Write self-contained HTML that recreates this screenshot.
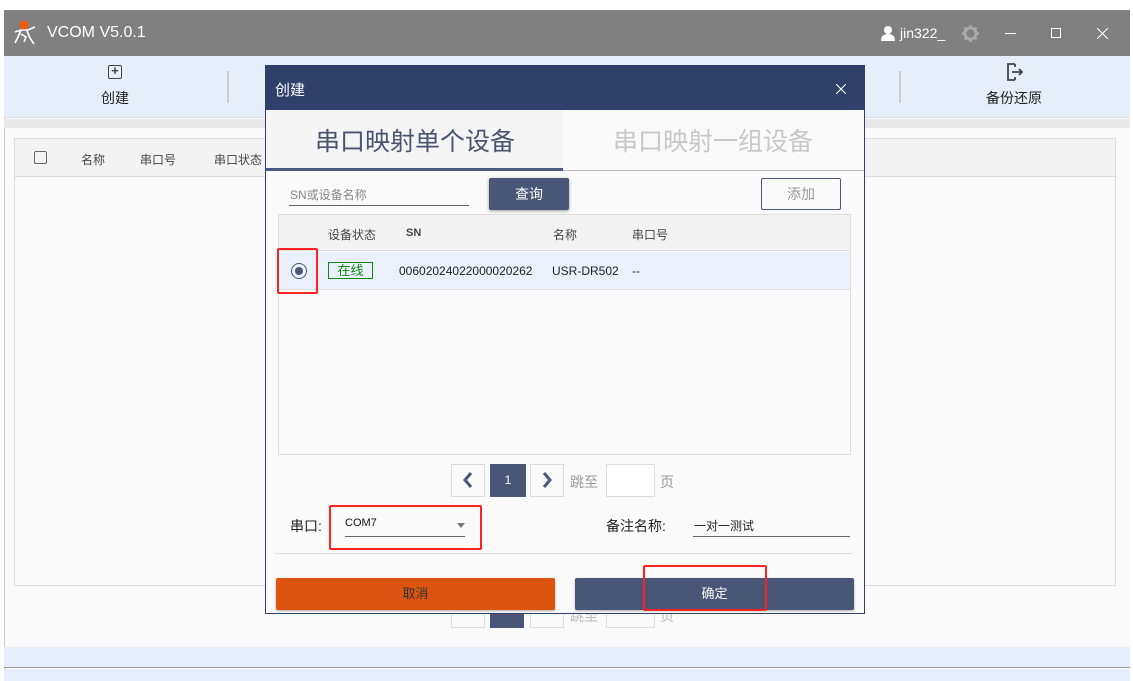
<!DOCTYPE html><html><head><meta charset="utf-8"><style>
*{margin:0;padding:0;box-sizing:border-box}
body{width:1133px;height:681px;position:relative;background:#fff;font-family:"Liberation Sans","Noto Sans CJK SC",sans-serif;overflow:hidden;font-size:12px;color:#333}
.a{position:absolute}
</style></head><body>
<div class="a" style="left:4px;top:10px;width:1126px;height:671px;background:#fafafa;border-left:1px solid #ccc"></div>
<div class="a" style="left:4px;top:10px;width:1126px;height:46px;background:#808080"></div>
<svg class="a" style="left:13px;top:19px" width="26" height="28" viewBox="0 0 26 28"><path d="M2 13 L8 11 L15 11 L22 8 M8 11 L5 18 L2 24 M14 12 L17 19 L21 25 M8 15 L13 18 L11 23" stroke="#fff" stroke-width="1.6" fill="none"/><circle cx="11" cy="6" r="4.5" fill="#f25a0c"/></svg>
<div class="a" style="left:47px;top:24px;color:#fff;font-size:16px">VCOM V5.0.1</div>
<svg class="a" style="left:880px;top:25px" width="16" height="16"><circle cx="8" cy="5" r="4" fill="#fff"/><path d="M1 16 Q1 9 8 9 Q15 9 15 16Z" fill="#fff"/></svg>
<div class="a" style="left:900px;top:25px;color:#fff;font-size:14px">jin322_</div>
<svg class="a" style="left:962px;top:25px" width="17" height="17" viewBox="0 0 17 17"><circle cx="8.5" cy="8.5" r="5.5" fill="none" stroke="#aaa" stroke-width="3"/><path d="M8.5 0v4M8.5 13v4M0 8.5h4M13 8.5h4M2.5 2.5l3 3M11.5 11.5l3 3M14.5 2.5l-3 3M2.5 14.5l3-3" stroke="#aaa" stroke-width="2.5"/></svg>
<div class="a" style="left:1005px;top:33px;width:11px;height:1px;background:#fff"></div>
<div class="a" style="left:1051px;top:28px;width:10px;height:10px;border:1px solid #fff"></div>
<svg class="a" style="left:1097px;top:28px" width="11" height="11"><path d="M0 0L11 11M11 0L0 11" stroke="#fff" stroke-width="1"/></svg>
<div class="a" style="left:4px;top:56px;width:1126px;height:62px;background:#e6eefa;border-bottom:1px solid #ddd"></div>
<div class="a" style="left:108px;top:65px;width:14px;height:14px;border:1.5px solid #444;border-radius:2px;text-align:center;line-height:10px;font-size:13px;font-weight:bold;color:#444">+</div>
<div class="a" style="left:101px;top:88px;font-size:14px;color:#222">创建</div>
<div class="a" style="left:227px;top:71px;width:2px;height:32px;background:#ccc"></div>
<div class="a" style="left:899px;top:71px;width:2px;height:32px;background:#ccc"></div>
<svg class="a" style="left:1005px;top:62px" width="20" height="20"><path d="M10 2H3v16h7M7 10h10M14 7l3 3-3 3M10 2v3M10 15v3" stroke="#444" stroke-width="1.8" fill="none"/></svg>
<div class="a" style="left:986px;top:88px;font-size:14px;color:#222">备份还原</div>
<div class="a" style="left:4px;top:119px;width:1126px;height:9px;background:#e8e8e8"></div>
<div class="a" style="left:14px;top:138px;width:1102px;height:448px;border:1px solid #ddd;background:#fafafa"></div>
<div class="a" style="left:15px;top:139px;width:1100px;height:38px;background:#f3f3f3;border-bottom:1px solid #ddd"></div>
<div class="a" style="left:34px;top:151px;width:13px;height:13px;border:1.5px solid #666;border-radius:2px"></div>
<div class="a" style="left:81px;top:151px;color:#444">名称</div>
<div class="a" style="left:140px;top:151px;color:#444">串口号</div>
<div class="a" style="left:214px;top:151px;color:#444">串口状态</div>
<div class="a" style="left:451px;top:604px;width:34px;height:24px;border:1px solid #ddd"></div>
<div class="a" style="left:490px;top:604px;width:34px;height:24px;background:#4a5678"></div>
<div class="a" style="left:530px;top:604px;width:34px;height:24px;border:1px solid #ddd"></div>
<div class="a" style="left:570px;top:606px;color:#bbb;font-size:14px">跳至</div>
<div class="a" style="left:606px;top:604px;width:49px;height:24px;border:1px solid #ddd"></div>
<div class="a" style="left:660px;top:606px;color:#bbb;font-size:14px">页</div>
<div class="a" style="left:4px;top:647px;width:1126px;height:21px;background:#e6eefa;border-bottom:1px solid #999"></div>
<div class="a" style="left:4px;top:669px;width:1126px;height:12px;background:#e6eefa"></div>
<!-- dialog -->
<div class="a" style="left:265px;top:65px;width:600px;height:549px;background:#fafafa;border:1px solid #30406a"></div>
<div class="a" style="left:265px;top:65px;width:600px;height:45px;background:#30406a"></div>
<div class="a" style="left:275px;top:79px;color:#fff;font-size:15px">创建</div>
<svg class="a" style="left:836px;top:84px" width="10" height="10"><path d="M0 0L10 10M10 0L0 10" stroke="#fff" stroke-width="1"/></svg>
<div class="a" style="left:266px;top:110px;width:297px;height:58px;background:#f5f5f5"></div>
<div class="a" style="left:266px;top:168px;width:297px;height:3px;background:#4a5a80"></div>
<div class="a" style="left:563px;top:170px;width:301px;height:1px;background:#bbb"></div>
<div class="a" style="left:315px;top:122px;font-size:25px;color:#4a5470">串口映射单个设备</div>
<div class="a" style="left:613px;top:122px;font-size:25px;color:#c8c8c8">串口映射一组设备</div>
<div class="a" style="left:290px;top:186px;color:#888">SN或设备名称</div>
<div class="a" style="left:289px;top:205px;width:180px;height:1px;background:#666"></div>
<div class="a" style="left:489px;top:178px;width:80px;height:32px;background:#4a5678;border-radius:2px;color:#fff;font-size:14px;text-align:center;line-height:32px;box-shadow:0 1px 3px #999">查询</div>
<div class="a" style="left:761px;top:178px;width:80px;height:32px;border:1px solid #4a5678;border-radius:2px;color:#999;font-size:14px;text-align:center;line-height:30px">添加</div>
<div class="a" style="left:278px;top:214px;width:573px;height:241px;border:1px solid #ddd;background:#fafafa"></div>
<div class="a" style="left:279px;top:215px;width:571px;height:36px;background:#f3f3f3;border-bottom:1px solid #ddd"></div>
<div class="a" style="left:328px;top:226px;color:#444">设备状态</div>
<div class="a" style="left:406px;top:227px;color:#444;font-weight:bold;font-size:11px">SN</div>
<div class="a" style="left:553px;top:226px;color:#444">名称</div>
<div class="a" style="left:632px;top:226px;color:#444">串口号</div>
<div class="a" style="left:279px;top:252px;width:571px;height:38px;background:#eaf0fc;border-bottom:1px solid #ddd"></div>
<div class="a" style="left:291px;top:263px;width:16px;height:16px;border:1.5px solid #4a5678;border-radius:50%"></div>
<div class="a" style="left:295px;top:267px;width:8px;height:8px;background:#4a5678;border-radius:50%"></div>
<div class="a" style="left:277px;top:248px;width:41px;height:46px;border:2px solid #f22;border-radius:2px"></div>
<div class="a" style="left:328px;top:262px;width:45px;height:17px;border:1px solid #181;color:#181;text-align:center;line-height:15px;font-size:13px">在线</div>
<div class="a" style="left:399px;top:264px;color:#222">00602024022000020262</div>
<div class="a" style="left:552px;top:264px;color:#222">USR-DR502</div>
<div class="a" style="left:632px;top:264px;color:#222">--</div>
<div class="a" style="left:451px;top:464px;width:34px;height:33px;border:1px solid #ddd"></div>
<svg class="a" style="left:462px;top:471px" width="12" height="18"><path d="M9 2L3 9l6 7" stroke="#4a5678" stroke-width="3" fill="none"/></svg>
<div class="a" style="left:490px;top:464px;width:36px;height:33px;background:#4a5678;color:#fff;text-align:center;line-height:33px">1</div>
<div class="a" style="left:530px;top:464px;width:34px;height:33px;border:1px solid #ddd"></div>
<svg class="a" style="left:541px;top:471px" width="12" height="18"><path d="M3 2l6 7-6 7" stroke="#4a5678" stroke-width="3" fill="none"/></svg>
<div class="a" style="left:570px;top:472px;color:#999;font-size:14px">跳至</div>
<div class="a" style="left:606px;top:464px;width:49px;height:33px;border:1px solid #ddd;background:#fff"></div>
<div class="a" style="left:660px;top:472px;color:#999;font-size:14px">页</div>
<div class="a" style="left:290px;top:516px;font-size:14px;color:#222">串口:</div>
<div class="a" style="left:345px;top:517px;font-size:11px;color:#111">COM7</div>
<div class="a" style="left:457px;top:523px;border:4px solid transparent;border-top:5px solid #777"></div>
<div class="a" style="left:345px;top:536px;width:120px;height:1px;background:#666"></div>
<div class="a" style="left:329px;top:505px;width:153px;height:45px;border:2px solid #f22;border-radius:2px"></div>
<div class="a" style="left:606px;top:516px;font-size:14px;color:#222">备注名称:</div>
<div class="a" style="left:694px;top:517px;color:#222">一对一测试</div>
<div class="a" style="left:693px;top:536px;width:157px;height:1px;background:#666"></div>
<div class="a" style="left:275px;top:553px;width:577px;height:1px;background:#ddd"></div>
<div class="a" style="left:276px;top:578px;width:279px;height:32px;background:#dd5310;border-radius:2px;color:#333;font-size:13px;text-align:center;line-height:32px;box-shadow:0 1px 2px #aaa">取消</div>
<div class="a" style="left:575px;top:578px;width:279px;height:32px;background:#4a5678;border-radius:2px;color:#fff;font-size:13px;text-align:center;line-height:32px;box-shadow:0 1px 2px #aaa">确定</div>
<div class="a" style="left:643px;top:565px;width:124px;height:46px;border:2px solid #f22;border-radius:2px"></div>
</body></html>
